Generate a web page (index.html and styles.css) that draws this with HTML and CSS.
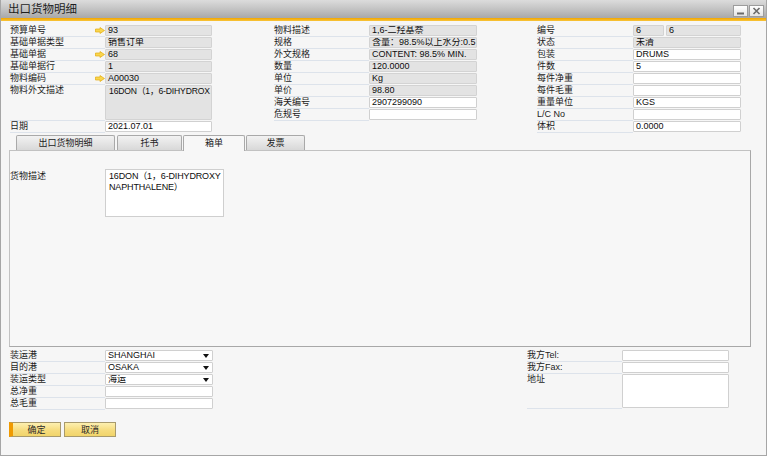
FILE: index.html
```html
<!DOCTYPE html>
<html lang="zh">
<head>
<meta charset="utf-8">
<title>出口货物明细</title>
<link rel="stylesheet" href="styles.css">
</head>
<body>
<div class="window">
  <div class="titlebar">
    <span class="title">出口货物明细</span>
    <div class="tb-buttons">
      <span class="tb-btn"><svg width="9" height="8" viewBox="0 0 9 8"><rect x="1" y="5.5" width="7" height="2" fill="#6a6a6a"/></svg></span>
      <span class="tb-btn"><svg width="9" height="8" viewBox="0 0 9 8"><path d="M1.5 1 L7.5 7 M7.5 1 L1.5 7" stroke="#6a6a6a" stroke-width="1.6"/></svg></span>
    </div>
  </div>
  <div class="accent"></div>
  <div class="body">
    <div class="top">
      <div class="col c1">
        <div class="row"><div class="lbl">预算单号<svg class="arrow" width="10" height="7" viewBox="0 0 10 7"><path d="M0.5 2 H5 V0.5 L9.5 3.5 L5 6.5 V5 H0.5 Z" fill="#f8d54e" stroke="#e4ac10" stroke-width="0.7"/></svg></div><div class="fld ro">93</div></div>
        <div class="row"><div class="lbl">基础单据类型</div><div class="fld ro">销售订单</div></div>
        <div class="row"><div class="lbl">基础单据<svg class="arrow" width="10" height="7" viewBox="0 0 10 7"><path d="M0.5 2 H5 V0.5 L9.5 3.5 L5 6.5 V5 H0.5 Z" fill="#f8d54e" stroke="#e4ac10" stroke-width="0.7"/></svg></div><div class="fld ro">68</div></div>
        <div class="row"><div class="lbl">基础单据行</div><div class="fld ro">1</div></div>
        <div class="row"><div class="lbl">物料编码<svg class="arrow" width="10" height="7" viewBox="0 0 10 7"><path d="M0.5 2 H5 V0.5 L9.5 3.5 L5 6.5 V5 H0.5 Z" fill="#f8d54e" stroke="#e4ac10" stroke-width="0.7"/></svg></div><div class="fld ro">A00030</div></div>
        <div class="row tall"><div class="lbl">物料外文描述</div><div class="fld ro area"><div class="line">16DON（1，6-DIHYDROX</div><div class="blur"><span class="b1"></span><span class="b2"></span><span class="b3"></span><span class="b4"></span><span class="b2"></span><span class="b1"></span></div></div></div>
        <div class="row"><div class="lbl">日期</div><div class="fld">2021.07.01</div></div>
      </div>
      <div class="col c2">
        <div class="row"><div class="lbl">物料描述</div><div class="fld ro">1,6-二羟基萘</div></div>
        <div class="row"><div class="lbl">规格</div><div class="fld ro">含量：98.5%以上水分:0.5</div></div>
        <div class="row"><div class="lbl">外文规格</div><div class="fld ro">CONTENT: 98.5% MIN.</div></div>
        <div class="row"><div class="lbl">数量</div><div class="fld ro">120.0000</div></div>
        <div class="row"><div class="lbl">单位</div><div class="fld ro">Kg</div></div>
        <div class="row"><div class="lbl">单价</div><div class="fld ro">98.80</div></div>
        <div class="row"><div class="lbl">海关编号</div><div class="fld">2907299090</div></div>
        <div class="row"><div class="lbl">危规号</div><div class="fld"></div></div>
      </div>
      <div class="col c3">
        <div class="row"><div class="lbl">编号</div><div class="pair"><div class="fld ro short">6</div><div class="fld ro">6</div></div></div>
        <div class="row"><div class="lbl">状态</div><div class="fld ro">未清</div></div>
        <div class="row"><div class="lbl">包装</div><div class="fld">DRUMS</div></div>
        <div class="row"><div class="lbl">件数</div><div class="fld">5</div></div>
        <div class="row"><div class="lbl">每件净重</div><div class="fld"></div></div>
        <div class="row"><div class="lbl">每件毛重</div><div class="fld"></div></div>
        <div class="row"><div class="lbl">重量单位</div><div class="fld">KGS</div></div>
        <div class="row"><div class="lbl">L/C No</div><div class="fld"></div></div>
        <div class="row"><div class="lbl">体积</div><div class="fld">0.0000</div></div>
      </div>
    </div>

    <div class="tabs">
      <div class="tab t1">出口货物明细</div>
      <div class="tab t2">托书</div>
      <div class="tab t3 active">箱单</div>
      <div class="tab t4">发票</div>
    </div>
    <div class="panel">
      <div class="prow">
        <div class="plbl">货物描述</div>
        <div class="parea"><div>16DON（1，6-DIHYDROXY</div><div>NAPHTHALENE）</div></div>
      </div>
    </div>

    <div class="bottom">
      <div class="col b1">
        <div class="row"><div class="lbl">装运港</div><div class="fld dd"><span>SHANGHAI</span><i class="caret"></i></div></div>
        <div class="row"><div class="lbl">目的港</div><div class="fld dd"><span>OSAKA</span><i class="caret"></i></div></div>
        <div class="row"><div class="lbl">装运类型</div><div class="fld dd"><span>海运</span><i class="caret"></i></div></div>
        <div class="row"><div class="lbl">总净重</div><div class="fld"></div></div>
        <div class="row"><div class="lbl">总毛重</div><div class="fld"></div></div>
      </div>
      <div class="col b2">
        <div class="row"><div class="lbl">我方Tel:</div><div class="fld"></div></div>
        <div class="row"><div class="lbl">我方Fax:</div><div class="fld"></div></div>
        <div class="row addr"><div class="lbl">地址</div><div class="fld"></div></div>
      </div>
    </div>

    <div class="buttons">
      <div class="btn ok">确定</div>
      <div class="btn">取消</div>
    </div>
  </div>
</div>
</body>
</html>
```

FILE: styles.css
```css
* { box-sizing: border-box; margin: 0; padding: 0; }
html, body { background: #ffffff; }
body {
  margin: 0;
  font-family: "Liberation Sans", "Noto Sans CJK SC", sans-serif;
  font-size: 9px;
  color: #1a1a1a;
}
.window {
  width: 767px;
  height: 456px;
  border: 1px solid #a6a6a6;
  border-top: none;
  background: #f6f6f6;
  display: flex;
  flex-direction: column;
}
.titlebar {
  height: 18px;
  background: linear-gradient(#dcdcdc, #c6c6c6 45%, #a8a8a8);
  display: flex;
  align-items: flex-end;
  justify-content: space-between;
  padding: 0 2px 1px 7px;
  flex: none;
}
.title {
  font-family: "Noto Sans CJK SC", sans-serif;
  font-size: 11.5px;
  line-height: 17px;
  color: #1e1e1e;
  align-self: center;
}
.tb-buttons { display: flex; gap: 1px; }
.tb-btn {
  width: 15px;
  height: 12px;
  border: 1px solid #9c9c9c;
  background: linear-gradient(#ffffff, #e4e4e4);
  display: flex;
  align-items: center;
  justify-content: center;
}
.accent {
  height: 3px;
  flex: none;
  background: linear-gradient(#f2a600, #f8c43a);
}
.body {
  padding: 4px 0 0 9px;
  display: flex;
  flex-direction: column;
}
.top { display: flex; height: 108px; }
.col { display: flex; flex-direction: column; }
.c1 { width: 202px; }
.c2 { width: 203px; margin-left: 62px; }
.c3 { width: 204px; margin-left: 60px; }
.row { display: flex; height: 12px; }
.row.tall { height: 36px; }
.lbl {
  flex: none;
  height: 100%;
  border-bottom: 1px solid #dde3eb;
  display: flex;
  justify-content: space-between;
  align-items: flex-start;
  line-height: 11px;
  white-space: nowrap;
  color: #1c1c1c;
}
.c1 .lbl, .c2 .lbl { width: 95px; }
.c3 .lbl { width: 96px; }
.arrow { margin-top: 2px; margin-right: 0; }
.fld {
  flex: 1;
  height: 11px;
  border: 1px solid #d0d0d0;
  border-radius: 1px;
  background: #ffffff;
  padding-left: 2px;
  line-height: 9px;
  white-space: nowrap;
  overflow: hidden;
  color: #0d0d0d;
}
.fld.ro { background: #e3e3e3; border-color: #d3d3d3; }
.row.tall .fld { height: 35px; padding-left: 3px; }
.fld.area .line { line-height: 11px; font-size: 8.6px; letter-spacing: -0.15px; }
.blur { display: flex; gap: 3px; margin-top: 3px; filter: blur(0.8px); }
.blur span { display: block; height: 9px; }
.blur .b1 { width: 8px; background: #d2d2d2; }
.blur .b2 { width: 9px; background: #b8b8b8; }
.blur .b3 { width: 14px; background: #c4c4c4; margin-left: 6px; }
.blur .b4 { width: 10px; background: #d0d0d0; }
.pair { flex: 1; display: flex; gap: 2px; }
.pair .fld.short { flex: none; width: 31px; }

.tabs {
  display: flex;
  align-items: flex-start;
  margin: 2px 0 0 6px;
  height: 15px;
  position: relative;
  z-index: 1;
}
.tab {
  height: 15px;
  border: 1px solid #a9a9a9;
  border-bottom: none;
  border-radius: 2px 2px 0 0;
  background: linear-gradient(#f2f2f2, #d8d8d8);
  font-family: "Noto Sans CJK SC", sans-serif;
  text-align: center;
  line-height: 13px;
  color: #222;
}
.tab.active { height: 16px; background: #f7f7f7; }
.t1 { width: 99px; margin-right: 2px; }
.t2 { width: 65px; margin-right: 1px; }
.t3 { width: 62px; margin-right: 1px; }
.t4 { width: 59px; }
.panel {
  margin-left: -1px;
  width: 742px;
  height: 197px;
  background: #f7f7f7;
  border: 1px solid #c2c2c2;
  border-right-color: #a8a8a8;
  border-bottom-color: #a8a8a8;
  padding-top: 18px;
}
.prow { display: flex; }
.plbl { width: 95px; padding-top: 2px; line-height: 11px; }
.parea {
  width: 119px;
  height: 48px;
  background: #ffffff;
  border: 1px solid #cfcfcf;
  padding: 1px 0 0 3px;
  line-height: 10.5px;
  white-space: nowrap;
  letter-spacing: -0.15px;
  color: #0d0d0d;
}

.bottom { display: flex; margin-top: 3px; }
.b1 { width: 203px; }
.b1 .lbl { width: 95px; }
.b2 { width: 202px; margin-left: 314px; }
.b2 .lbl { width: 95px; }
.row.addr { height: 35px; }
.row.addr .fld { height: 34px; }
.fld.dd { display: flex; justify-content: space-between; align-items: center; padding-right: 3px; }
.caret {
  display: block;
  width: 0;
  height: 0;
  border-left: 3px solid transparent;
  border-right: 3px solid transparent;
  border-top: 4px solid #111;
}

.buttons { display: flex; gap: 3px; margin: 12px 0 0 -1px; }
.btn {
  width: 52px;
  height: 15px;
  border: 1px solid #a89a6c;
  background: linear-gradient(#fdf0b0, #f6dc7e 55%, #f1d46a);
  text-align: center;
  line-height: 13px;
  font-family: "Noto Sans CJK SC", sans-serif;
  color: #2a2a2a;
}
.btn.ok {
  border-left: 4px solid #f09a00;
}
```
